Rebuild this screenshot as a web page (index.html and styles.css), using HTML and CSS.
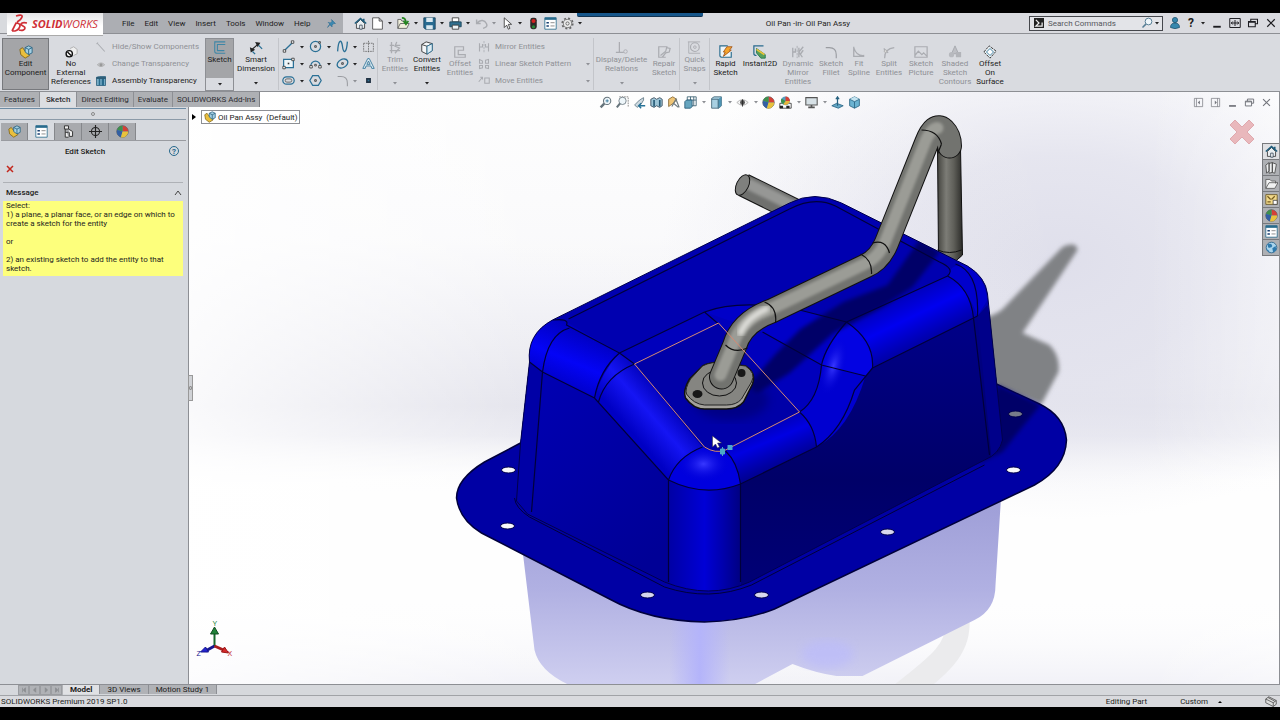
FILE: index.html
```html
<!DOCTYPE html>
<html lang="en">
<head>
<meta charset="utf-8">
<title>Oil Pan -in- Oil Pan Assy</title>
<link rel="stylesheet" href="styles.css">
</head>
<body>
<svg class="sprite" aria-hidden="true">
  <symbol id="line" viewBox="0 0 16 16"><path d="M3 13L13 3" stroke="#2a7096" stroke-width="1.6"/><path d="M1.500 12h3v3h-3zM11.500 1h3v3h-3z" fill="#fff" stroke="#333"/></symbol>
  <symbol id="circle" viewBox="0 0 16 16"><circle cx="8" cy="8" r="6.300" fill="none" stroke="#2a7096" stroke-width="1.500"/><path d="M7 7h2v2H7z" fill="none" stroke="#333"/><path d="M12 2h2v2h-2z" fill="#fff" stroke="#333"/></symbol>
  <symbol id="spline" viewBox="0 0 16 16"><path d="M2 14C3-2 7-1 8 8s5 9 6-6" fill="none" stroke="#2a7096" stroke-width="1.600"/></symbol>
  <symbol id="plane" viewBox="0 0 16 16"><path d="M2 4h12v10H2zM8 1v14" fill="none" stroke="#666" stroke-dasharray="2 1"/></symbol>
  <symbol id="rect" viewBox="0 0 16 16"><path d="M2 3h12v10H2z" fill="#eef5f8" stroke="#2a7096" stroke-width="1.500"/><path d="M7 7h2v2H7z" fill="#333"/><path d="M12 1.500h3v3h-3zM1 11.500h3v3H1z" fill="#fff" stroke="#333"/></symbol>
  <symbol id="arc" viewBox="0 0 16 16"><path d="M2 12a6 7 0 0 1 12 0" fill="none" stroke="#2a7096" stroke-width="1.500"/><path d="M1 10.500h3v3H1zM12 10.500h3v3h-3zM7 9h2v2H7z" fill="#fff" stroke="#333"/></symbol>
  <symbol id="ellipse" viewBox="0 0 16 16"><ellipse cx="8" cy="8" rx="7" ry="5" transform="rotate(-30 8 8)" fill="none" stroke="#2a7096" stroke-width="1.600"/><path d="M7 7h2v2H7z" fill="none" stroke="#333"/></symbol>
  <symbol id="text" viewBox="0 0 16 16"><path d="M1 14L7 2h2l6 12h-3l-1-3H5l-1 3zM6 9h4L8 5z" fill="#dcebf2" stroke="#2a7096"/></symbol>
  <symbol id="slot" viewBox="0 0 16 16"><rect x="1" y="3.500" width="14" height="9" rx="4.500" fill="none" stroke="#2a7096" stroke-width="1.500"/><rect x="4" y="6" width="8" height="4" rx="2" fill="none" stroke="#555"/></symbol>
  <symbol id="hex" viewBox="0 0 16 16"><path d="M4.500 2h7L15 8l-3.500 6h-7L1 8z" fill="none" stroke="#2a7096" stroke-width="1.500"/><path d="M7 7h2v2H7z" fill="none" stroke="#333"/></symbol>
  <symbol id="fillet" viewBox="0 0 16 16"><path d="M2 3h4q8 0 8 8v4" fill="none" stroke="#9a9ca1" stroke-width="1.300"/></symbol>
  <symbol id="point" viewBox="0 0 16 16"><path d="M6 6h4v4H6z" fill="#2a7096" stroke="#234" stroke-width="2"/></symbol>
  <symbol id="assy" viewBox="0 0 16 16"><path d="M1 5l3-2 3 4 5 2v3l-5 3-5-4z" fill="#e9bf3d" stroke="#80651a"/><path d="M7 3l4-2 4 2v6l-4 2-4-3z" fill="#a4cfe2" stroke="#286281"/><path d="M7 3l4 2 4-2M11 5v6" fill="none" stroke="#286281"/></symbol>
  <symbol id="noref" viewBox="0 0 16 16"><path d="M7 4l4-2 4 3v5l-4 2" fill="#eee" stroke="#aaa"/><circle cx="6" cy="10" r="3.600" fill="#fff" stroke="#111" stroke-width="1.600"/><path d="M4 8l4 4" stroke="#111" stroke-width="1.600"/></symbol>
  <symbol id="slash" viewBox="0 0 16 16"><path d="M3 3l10 11M2 4l2-2" stroke="#aaacb1" stroke-width="1.400"/></symbol>
  <symbol id="eyeoff" viewBox="0 0 16 16"><path d="M3 9q5-5 10 0-5 5-10 0z" fill="#c3c5c9" stroke="#aaa"/><circle cx="8" cy="9" r="2" fill="#999"/></symbol>
  <symbol id="assytrans" viewBox="0 0 16 16"><path d="M2 3l4-1h8v12H2z" fill="#77adc7" stroke="#245875"/><path d="M5 5h2v9H5zM9 5h3v9H9z" fill="#286b8d"/><path d="M2 4h12" stroke="#174761" stroke-width="2"/></symbol>
  <symbol id="sketch" viewBox="0 0 16 16"><path d="M14 1H2v11q0 2 3 2h9M14 4H5v7h8" fill="none" stroke="#3e86a6" stroke-width="1.200"/></symbol>
  <symbol id="dimension" viewBox="0 0 16 16"><path d="M3 10L11 3" stroke="#222" stroke-width="1.300"/><path d="M7 1l6 1-3 5zM1 7l1 6 5-3z" fill="#222"/><path d="M11 5l4 4M4 12l3 3" stroke="#2a7096" stroke-width="1.500"/></symbol>
  <symbol id="trim" viewBox="0 0 16 16"><path d="M2 5h5M9 5h5M2 11h12M4 1v13M10 1l-2 5 5 2-5 6" fill="none" stroke="#aaacb1" stroke-width="1.500"/></symbol>
  <symbol id="convert" viewBox="0 0 16 16"><path d="M2 4l5-3 7 2v8l-6 4-6-3z" fill="#f5f7f8" stroke="#333"/><path d="M2 4l6 2 6-3M8 6v9" fill="none" stroke="#333"/><path d="M8 6l6-3v8l-6 4z" fill="#dcebf2" stroke="#2a7096"/></symbol>
  <symbol id="offset" viewBox="0 0 16 16"><path d="M12 2H2v12h12v-3H6V6h6z" fill="none" stroke="#aaacb1" stroke-width="1.400"/></symbol>
  <symbol id="mirror" viewBox="0 0 16 16"><path d="M8 0v16" stroke="#aaacb1" stroke-dasharray="3 1"/><path d="M2 3v11M2 8h4V4M14 3v11M14 8h-4V4" fill="none" stroke="#aaacb1" stroke-width="1.500"/></symbol>
  <symbol id="dynmirror" viewBox="0 0 16 16"><path d="M7 1v14" stroke="#aaacb1" stroke-dasharray="3 1"/><path d="M2 3v11M2 8h3V4M14 2l-5 6 4 6M9 3v11M14 6l-3 4" fill="none" stroke="#aaacb1" stroke-width="1.500"/></symbol>
  <symbol id="pattern" viewBox="0 0 16 16"><path d="M2 2l4 2v3H2zM10 3l4-1v5h-4zM2 10h4v3l-4 1zM10 10h4v4l-4-1z" fill="none" stroke="#aaacb1" stroke-width="1.400"/></symbol>
  <symbol id="move" viewBox="0 0 16 16"><path d="M1 9l5-6M3 3h3v3M9 4h6v7H9z" fill="none" stroke="#aaacb1" stroke-width="1.400"/></symbol>
  <symbol id="relations" viewBox="0 0 16 16"><path d="M1 13h9M5 1v12" stroke="#aaacb1" stroke-width="1.400"/><circle cx="12" cy="12" r="2" fill="none" stroke="#aaacb1"/></symbol>
  <symbol id="repair" viewBox="0 0 16 16"><path d="M12 2H2v12h8M4 12l6-5 1-4 4 1-1 4-4 1-4 5" fill="none" stroke="#aaacb1" stroke-width="1.400"/></symbol>
  <symbol id="snaps" viewBox="0 0 16 16"><path d="M1 1h14M2 1v13h13" fill="none" stroke="#aaacb1"/><circle cx="9" cy="7" r="5" fill="none" stroke="#aaacb1" stroke-width="1.300"/><circle cx="9" cy="7" r="1.500" fill="none" stroke="#aaacb1"/></symbol>
  <symbol id="rapid" viewBox="0 0 16 16"><path d="M10 1H1v11q0 2 3 2h10V8" fill="#eef5f8" stroke="#286b8d" stroke-width="1.300"/><path d="M9 2h6l-3 4h2L5 13l2-5H5z" fill="#f5a42c" stroke="#a3571d"/></symbol>
  <symbol id="instant" viewBox="0 0 16 16"><path d="M12 1H1v9q0 2 3 2" fill="none" stroke="#286b8d" stroke-width="1.400"/><path d="M4 4l10 7v4H9L4 9z" fill="#59a05b" stroke="#275"/><path d="M4 5l9 6" stroke="#eac336" stroke-width="2"/></symbol>
  <symbol id="fit" viewBox="0 0 16 16"><path d="M2 2v11h12M2 3q3 10 12 9" fill="none" stroke="#aaacb1" stroke-width="1.500"/></symbol>
  <symbol id="split" viewBox="0 0 16 16"><path d="M3 15Q3 4 14 3M2 4l5 5" fill="none" stroke="#aaacb1" stroke-width="1.400"/><circle cx="4" cy="7" r="1.500" fill="#ddd" stroke="#aaa"/></symbol>
  <symbol id="picture" viewBox="0 0 16 16"><path d="M1 2h14v12H1zM1 12l4-5 4 4 2-2 4 4" fill="none" stroke="#aaacb1" stroke-width="1.400"/></symbol>
  <symbol id="shaded" viewBox="0 0 16 16"><path d="M8 1l4 9H4z" fill="#bdbfc4" stroke="#a4a6ab"/><circle cx="4" cy="11" r="3" fill="#b7b9be"/><path d="M9 8h6v6H9z" fill="#b2b4b9"/></symbol>
  <symbol id="surface" viewBox="0 0 16 16"><path d="M1 8l6-7 8 6-7 8z" fill="#eef3f5" stroke="#222" stroke-dasharray="3 1"/><path d="M4 8l4-4 4 4-4 4z" fill="#fff" stroke="#2a7096"/></symbol>
  <symbol id="home" viewBox="0 0 16 16"><path d="M3 8v6h10V8L8 3z" fill="#e9eef1" stroke="#333"/><path d="M1 8l7-6 7 6M12 2v4" fill="none" stroke="#1f5c7b" stroke-width="2"/><path d="M7 10h3v5H7z" fill="#fff" stroke="#345"/></symbol>
  <symbol id="new" viewBox="0 0 16 16"><path d="M2 1h8l4 4v10H2zM10 1v4h4" fill="#fff" stroke="#444"/></symbol>
  <symbol id="open" viewBox="0 0 16 16"><path d="M1 14V3h4l1 2h5v3M1 14l3-6h11l-3 6z" fill="#f0efdc" stroke="#555"/><path d="M6 1q5 0 5 6M8 5l3 4 3-4" fill="none" stroke="#24851f" stroke-width="2"/></symbol>
  <symbol id="save" viewBox="0 0 16 16"><path d="M1 1h14v14H3l-2-2z" fill="#286b91" stroke="#163f59"/><path d="M4 1h8v5H4zM4 10h8v5H4z" fill="#dbe9f0"/></symbol>
  <symbol id="print" viewBox="0 0 16 16"><path d="M4 1h8v5H4z" fill="#fff" stroke="#333"/><path d="M1 6h14v6H1z" fill="#31708f" stroke="#174156"/><path d="M4 10h8v5H4z" fill="#eef4f6" stroke="#333"/></symbol>
  <symbol id="undo" viewBox="0 0 16 16"><path d="M2 3v5h5M2 8c5-6 10-4 12 0s-1 5-4 6" fill="none" stroke="#aaacb1" stroke-width="1.800"/></symbol>
  <symbol id="cursor" viewBox="0 0 16 16"><path d="M4 1v12l3-3 2 5 2-1-2-5h4z" fill="#fff" stroke="#333"/></symbol>
  <symbol id="traffic" viewBox="0 0 16 16"><rect x="4" y="1" width="8" height="14" rx="3" fill="#2d2926"/><circle cx="8" cy="5" r="2.500" fill="#d32121"/><circle cx="8" cy="12" r="2" fill="#278736"/></symbol>
  <symbol id="list" viewBox="0 0 16 16"><path d="M1 1h14v14H1z" fill="#fff" stroke="#286b8d"/><path d="M1 2h14" stroke="#286b8d" stroke-width="3"/><path d="M3 6h3v2H3zM3 10h3v2H3z" fill="#173e70"/><path d="M8 7h5M8 11h5" stroke="#777"/></symbol>
  <symbol id="gear" viewBox="0 0 16 16"><circle cx="8" cy="8" r="6.500" fill="none" stroke="#666" stroke-width="2" stroke-dasharray="2.500 2.600"/><circle cx="8" cy="8" r="5" fill="#eee" stroke="#666"/><circle cx="8" cy="8" r="2" fill="none" stroke="#555"/></symbol>
  <symbol id="pin" viewBox="0 0 16 16"><path d="M8 1l7 7-3 0-3 3v3L5 10 1 15l4-6L2 6l4 1 3-3z" fill="#3c88b0" stroke="#2a6b90"/></symbol>
  <symbol id="user" viewBox="0 0 16 16"><circle cx="8" cy="4" r="3.500" fill="#3688ae" stroke="#1c526e"/><path d="M2 14q0-6 6-6t6 6q-6 3-12 0z" fill="#3688ae" stroke="#1c526e"/></symbol>
  <symbol id="prompt" viewBox="0 0 16 16"><path d="M0 0h16v16H0z" fill="#222"/><path d="M3 3l5 5-5 5h10V7" fill="none" stroke="#eee" stroke-width="2"/></symbol>
  <symbol id="lens" viewBox="0 0 16 16"><circle cx="10" cy="6" r="4.500" fill="#eff6fa" stroke="#557d94" stroke-width="1.300"/><path d="M6.500 9.500L2 14" stroke="#557d94" stroke-width="2"/></symbol>
  <symbol id="zoomfit" viewBox="0 0 16 16"><circle cx="10" cy="6" r="4.500" fill="#eff6fa" stroke="#66747c" stroke-width="1.300"/><path d="M8 6h4M10 4v4" stroke="#2a7096"/><path d="M6.500 9.500L2 14" stroke="#66747c" stroke-width="3"/></symbol>
  <symbol id="min" viewBox="0 0 16 16"><path d="M3 13h10" stroke="currentColor" stroke-width="2.500"/></symbol>
  <symbol id="expand" viewBox="0 0 16 16"><path d="M1 2h14v12H1zM8 4v8M3 8h10M5 6L3 8l2 2M11 6l2 2-2 2" fill="none" stroke="currentColor" stroke-width="1.300"/></symbol>
  <symbol id="restore" viewBox="0 0 16 16"><path d="M5 6V3h9v6h-3M2 6h9v7H2zM2 7h9" fill="none" stroke="currentColor" stroke-width="1.400"/></symbol>
  <symbol id="close" viewBox="0 0 16 16"><path d="M3 3l10 10M13 3L3 13" stroke="currentColor" stroke-width="1.600"/></symbol>
  <symbol id="paneleft" viewBox="0 0 16 16"><path d="M2 2h12v12H2zM5 2v12" fill="none" stroke="currentColor"/><path d="M10 5v6L7 8z" fill="currentColor"/></symbol>
  <symbol id="paneright" viewBox="0 0 16 16"><path d="M2 2h12v12H2zM11 2v12" fill="none" stroke="currentColor"/><path d="M7 5v6l3-3z" fill="currentColor"/></symbol>
  <symbol id="target" viewBox="0 0 16 16"><circle cx="8" cy="8" r="5" fill="none" stroke="#222" stroke-width="1.300"/><path d="M0 8h16M8 0v16" stroke="#222" stroke-width="1.400"/></symbol>
  <symbol id="config" viewBox="0 0 16 16"><path d="M3 1h5v4H3zM4 5v10h4M4 9h4M8 5l5 3v6H9V9" fill="#eee" stroke="#333" stroke-width="1.200"/></symbol>
  <symbol id="ball" viewBox="0 0 16 16"><circle cx="8" cy="8" r="7" fill="#5189c1" stroke="#555"/><path d="M8 8V1a7 7 0 0 1 7 7z" fill="#d64036"/><path d="M8 8V1a7 7 0 0 0-6.500 5z" fill="#3e914c"/><path d="M8 8L1.500 6A7 7 0 0 0 6 15z" fill="#335fa4"/><path d="M8 8h7a7 7 0 0 1-9 7z" fill="#e8c23c"/></symbol>
  <symbol id="books" viewBox="0 0 16 16"><path d="M1 5l4-3v10l-3 3zM5 3l4-1v12l-4 1zM9 2l5 2-2 11-3-1z" fill="#eceeef" stroke="#444"/></symbol>
  <symbol id="folder" viewBox="0 0 16 16"><path d="M1 14V3h5l2 2h5v3M1 14l4-7h11l-4 7z" fill="#f1f2f2" stroke="#555"/></symbol>
  <symbol id="palette" viewBox="0 0 16 16"><path d="M1 2h14v12H1z" fill="#f1d98a" stroke="#635223"/><path d="M3 4l4 4M12 4L8 8M3 11h4" stroke="#755b20" stroke-width="1.500"/><path d="M10 9h5v5h-5z" fill="#fff" stroke="#444"/></symbol>
  <symbol id="globe" viewBox="0 0 16 16"><circle cx="8" cy="8" r="6.500" fill="#a9d4ec" stroke="#24608a"/><path d="M3 4q5-2 6 2-1 3-5 2M9 9l4-3 1 5-4 3zM1 10q4 0 5 5" fill="#2d79ad"/></symbol>
  <symbol id="zoomarea" viewBox="0 0 16 16"><path d="M4 1h11v12" fill="none" stroke="#777" stroke-dasharray="2 1"/><circle cx="8" cy="6" r="4.500" fill="#eef6fa" stroke="#66747c"/><path d="M5 9l-4 5" stroke="#66747c" stroke-width="2.500"/></symbol>
  <symbol id="prev" viewBox="0 0 16 16"><path d="M13 2L8 5 2 11l3 3 5-4 3-5z" fill="#cdd9e0" stroke="#5d7481"/><path d="M7 12h8m-5-3l-3 3 3 3" fill="none" stroke="#267297" stroke-width="1.700"/></symbol>
  <symbol id="section" viewBox="0 0 16 16"><path d="M1 4l4-2 3 2 4-2 3 2v8l-3 2-4-2-3 2-4-2z" fill="#9cc4d6" stroke="#345"/><path d="M5 5v8M12 5v8" stroke="#245875" stroke-width="2"/></symbol>
  <symbol id="dynamicview" viewBox="0 0 16 16"><path d="M2 4l5-3 5 3-3 4-7 5z" fill="#efc578" stroke="#836430"/><path d="M6 13l5-9 4 10M8 9l6 5" fill="none" stroke="#6f7b80" stroke-width="1.500"/></symbol>
  <symbol id="views" viewBox="0 0 16 16"><path d="M4 1h11v11H4zM8 1v9M4 5h11M12 1v11" fill="#fff" stroke="#31596b"/><path d="M1 7l2-2h7v8l-2 2H1z" fill="#66a5bf" stroke="#245875"/></symbol>
  <symbol id="cube" viewBox="0 0 16 16"><path d="M2 4l6-3 6 3v8l-6 3-6-3z" fill="#6bb3d2" stroke="#286281"/><path d="M2 4l6 3 6-3-6-3z" fill="#c3e3f0"/><path d="M8 7v8M2 4l6 3 6-3" fill="none" stroke="#286281"/></symbol>
  <symbol id="shadebox" viewBox="0 0 16 16"><path d="M2 3l3-2h9v11l-3 3H2z" fill="#a8d0e2" stroke="#3d6072"/><path d="M10 4l4-3v11l-4 3z" fill="#4e94b3"/><path d="M2 4h8v11" fill="none" stroke="#3d6072"/></symbol>
  <symbol id="eye" viewBox="0 0 16 16"><path d="M1 8q7-7 14 0-7 7-14 0z" fill="#f3f3f3" stroke="#aaa"/><circle cx="8" cy="8" r="3" fill="#555"/><path d="M8 4v9" stroke="#222"/></symbol>
  <symbol id="scene" viewBox="0 0 16 16"><path d="M1 9h14v6H1z" fill="#fff" stroke="#333"/><path d="M1 12h4v3H1zM9 12h4v3H9z" fill="#222"/><circle cx="8" cy="6" r="5.500" fill="#549dc1"/><path d="M8 6V.5A5.500 5.500 0 0 1 13.500 6z" fill="#d64036"/><path d="M8 6h5.500A5.500 5.500 0 0 1 5 10z" fill="#e8b63c"/><path d="M8 6L3 3a5.500 5.500 0 0 0 2 7z" fill="#3e914c"/></symbol>
  <symbol id="monitor" viewBox="0 0 16 16"><path d="M1 2h14v9H1z" fill="#d7e1e6" stroke="#555" stroke-width="1.300"/><path d="M8 11v3M4 14h8" stroke="#555" stroke-width="2"/></symbol>
  <symbol id="normal" viewBox="0 0 16 16"><path d="M1 12l6-3 8 3-6 3z" fill="#65a8c6" stroke="#286281"/><path d="M8 12V2M6 4l2-3 2 3" fill="none" stroke="#286281" stroke-width="1.500"/></symbol>
  <symbol id="eraser" viewBox="0 0 16 16"><path d="M1 4l4-3 10 5v5l-4 3L1 9zM1 4l10 5v5M11 9l4-3M4 2l9 5" fill="#ddd" stroke="#444"/></symbol>
  <symbol id="caret" viewBox="0 0 6 6"><path d="M1 2h4L3 4.500z" fill="currentColor"/></symbol>
</svg>

<header class="titlebar">
  <div class="menuzone">
    <div class="brand" aria-label="SOLIDWORKS">
      <svg class="brandmark" viewBox="0 0 18 20" aria-hidden="true"><path d="M5 2q7-2 6 1-1 3-5 5M1 17h3q4-1 5-5 0-3-4-3L1 17M16 9q-5-1-6 1c0 2 4 2 4 4s-3 3-6 2" fill="none" stroke="#cf2f36" stroke-width="1.700"/></svg>
      <span class="brandtext"><b>SOLID</b>WORKS</span>
    </div>
    <nav class="menus">
      <button>File</button><button>Edit</button><button>View</button><button>Insert</button><button>Tools</button><button>Window</button><button>Help</button>
    </nav>
    <button class="ico" aria-label="Pin menu"><svg><use href="#pin"/></svg></button>
  </div>
  <div class="quick">
    <button class="ico" aria-label="Home"><svg><use href="#home"/></svg></button>
    <button class="ico" aria-label="New"><svg><use href="#new"/></svg></button><button class="car" aria-label="New options"><svg><use href="#caret"/></svg></button>
    <button class="ico" aria-label="Open"><svg><use href="#open"/></svg></button><button class="car" aria-label="Open options"><svg><use href="#caret"/></svg></button>
    <button class="ico" aria-label="Save"><svg><use href="#save"/></svg></button><button class="car" aria-label="Save options"><svg><use href="#caret"/></svg></button>
    <button class="ico" aria-label="Print"><svg><use href="#print"/></svg></button><button class="car" aria-label="Print options"><svg><use href="#caret"/></svg></button>
    <button class="ico" aria-label="Undo"><svg><use href="#undo"/></svg></button><button class="car off" aria-label="Undo options"><svg><use href="#caret"/></svg></button>
    <button class="ico" aria-label="Select"><svg><use href="#cursor"/></svg></button><button class="car" aria-label="Select options"><svg><use href="#caret"/></svg></button>
    <button class="ico" aria-label="Rebuild"><svg><use href="#traffic"/></svg></button>
    <button class="ico" aria-label="File properties"><svg><use href="#list"/></svg></button>
    <button class="ico" aria-label="Options"><svg><use href="#gear"/></svg></button><button class="car" aria-label="More options"><svg><use href="#caret"/></svg></button>
  </div>
  <div class="doctitle">Oil Pan -in- Oil Pan Assy</div>
  <div class="titleright">
    <div class="search">
      <svg class="s10"><use href="#prompt"/></svg>
      <input type="text" placeholder="Search Commands" aria-label="Search Commands">
      <button class="ico" aria-label="Search"><svg><use href="#lens"/></svg></button><button class="car" aria-label="Search options"><svg><use href="#caret"/></svg></button>
    </div>
    <button class="ico" aria-label="Account"><svg><use href="#user"/></svg></button>
    <button class="help" aria-label="Help">?</button><button class="car" aria-label="Help options"><svg><use href="#caret"/></svg></button>
    <button class="ico" aria-label="Minimize"><svg><use href="#min"/></svg></button>
    <button class="ico" aria-label="Span displays"><svg><use href="#expand"/></svg></button>
    <button class="ico" aria-label="Restore"><svg><use href="#restore"/></svg></button>
    <button class="ico" aria-label="Close"><svg><use href="#close"/></svg></button>
  </div>
  <div class="sharebar"></div>
</header>

<section class="ribbon" aria-label="Sketch commands">
  <button class="tool pressed w48"><svg><use href="#assy"/></svg><span>Edit<br>Component</span></button>
  <button class="tool w44"><svg><use href="#noref"/></svg><span>No<br>External<br>References</span></button>
  <div class="rows assyrows">
    <button disabled><svg><use href="#slash"/></svg>Hide/Show Components</button>
    <button disabled><svg><use href="#eyeoff"/></svg>Change Transparency</button>
    <button><svg><use href="#assytrans"/></svg>Assembly Transparency</button>
  </div>
  <div class="splitbtn"><button class="tool tight pressed"><svg><use href="#sketch"/></svg><span>Sketch</span></button><button class="car" aria-label="Sketch options"><svg><use href="#caret"/></svg></button></div>
  <div class="stack w44"><button class="tool tight"><svg><use href="#dimension"/></svg><span>Smart<br>Dimension</span></button><button class="car" aria-label="Dimension options"><svg><use href="#caret"/></svg></button></div>
  <div class="shapes">
    <button class="ico" aria-label="Line"><svg><use href="#line"/></svg></button><button class="car" aria-label="Line options"><svg><use href="#caret"/></svg></button>
    <button class="ico" aria-label="Circle"><svg><use href="#circle"/></svg></button><button class="car" aria-label="Circle options"><svg><use href="#caret"/></svg></button>
    <button class="ico" aria-label="Spline"><svg><use href="#spline"/></svg></button><button class="car" aria-label="Spline options"><svg><use href="#caret"/></svg></button>
    <button class="ico" aria-label="Plane"><svg><use href="#plane"/></svg></button>
    <button class="ico" aria-label="Rectangle"><svg><use href="#rect"/></svg></button><button class="car" aria-label="Rectangle options"><svg><use href="#caret"/></svg></button>
    <button class="ico" aria-label="Arc"><svg><use href="#arc"/></svg></button><button class="car" aria-label="Arc options"><svg><use href="#caret"/></svg></button>
    <button class="ico" aria-label="Ellipse"><svg><use href="#ellipse"/></svg></button><button class="car" aria-label="Ellipse options"><svg><use href="#caret"/></svg></button>
    <button class="ico" aria-label="Text"><svg><use href="#text"/></svg></button>
    <button class="ico" aria-label="Slot"><svg><use href="#slot"/></svg></button><button class="car" aria-label="Slot options"><svg><use href="#caret"/></svg></button>
    <button class="ico" aria-label="Polygon"><svg><use href="#hex"/></svg></button><span></span>
    <button class="ico" aria-label="Sketch fillet"><svg><use href="#fillet"/></svg></button><button class="car off" aria-label="Fillet options"><svg><use href="#caret"/></svg></button>
    <button class="ico" aria-label="Point"><svg><use href="#point"/></svg></button>
  </div>
  <div class="stack w32"><button class="tool tight" disabled><svg><use href="#trim"/></svg><span>Trim<br>Entities</span></button><button class="car off" aria-label="Trim options"><svg><use href="#caret"/></svg></button></div>
  <div class="stack w32"><button class="tool tight"><svg><use href="#convert"/></svg><span>Convert<br>Entities</span></button><button class="car" aria-label="Convert options"><svg><use href="#caret"/></svg></button></div>
  <button class="tool w34" disabled><svg><use href="#offset"/></svg><span>Offset<br>Entities</span></button>
  <div class="rows entrows">
    <button disabled><svg><use href="#mirror"/></svg>Mirror Entities</button>
    <button disabled><svg><use href="#pattern"/></svg>Linear Sketch Pattern<svg class="end"><use href="#caret"/></svg></button>
    <button disabled><svg><use href="#move"/></svg>Move Entities<svg class="end"><use href="#caret"/></svg></button>
  </div>
  <div class="stack w56 sep"><button class="tool tight" disabled><svg><use href="#relations"/></svg><span>Display/Delete<br>Relations</span></button><button class="car off" aria-label="Relations options"><svg><use href="#caret"/></svg></button></div>
  <button class="tool w30" disabled><svg><use href="#repair"/></svg><span>Repair<br>Sketch</span></button>
  <div class="stack w30 sep"><button class="tool tight" disabled><svg><use href="#snaps"/></svg><span>Quick<br>Snaps</span></button><button class="car off" aria-label="Snap options"><svg><use href="#caret"/></svg></button></div>
  <button class="tool w32 sep"><svg><use href="#rapid"/></svg><span>Rapid<br>Sketch</span></button>
  <button class="tool w38"><svg><use href="#instant"/></svg><span>Instant2D</span></button>
  <button class="tool w38" disabled><svg><use href="#dynmirror"/></svg><span>Dynamic<br>Mirror<br>Entities</span></button>
  <button class="tool w28" disabled><svg><use href="#fillet"/></svg><span>Sketch<br>Fillet</span></button>
  <button class="tool w28" disabled><svg><use href="#fit"/></svg><span>Fit<br>Spline</span></button>
  <button class="tool w32" disabled><svg><use href="#split"/></svg><span>Split<br>Entities</span></button>
  <button class="tool w32" disabled><svg><use href="#picture"/></svg><span>Sketch<br>Picture</span></button>
  <button class="tool w36" disabled><svg><use href="#shaded"/></svg><span>Shaded<br>Sketch<br>Contours</span></button>
  <button class="tool w34"><svg><use href="#surface"/></svg><span>Offset<br>On<br>Surface</span></button>
</section>

<main class="main">
  <nav class="cmdtabs"><button>Features</button><button class="on">Sketch</button><button>Direct Editing</button><button>Evaluate</button><button>SOLIDWORKS Add-Ins</button></nav>
  <aside class="side">
    <div class="grip"><i></i></div>
    <nav class="ptabs">
      <button aria-label="Feature tree"><svg><use href="#assy"/></svg></button>
      <button class="on" aria-label="Property manager"><svg><use href="#list"/></svg></button>
      <button aria-label="Configurations"><svg><use href="#config"/></svg></button>
      <button aria-label="DimXpert"><svg><use href="#target"/></svg></button>
      <button aria-label="Display manager"><svg><use href="#ball"/></svg></button>
    </nav>
    <div class="phead"><h1>Edit Sketch</h1><button class="q" aria-label="Help">?</button></div>
    <button class="cancel" aria-label="Cancel"><svg viewBox="0 0 8 8"><path d="M1 1l6 6M7 1L1 7" stroke="#c3261c" stroke-width="1.500"/></svg></button>
    <section class="msg">
      <button class="msghead">Message<svg viewBox="0 0 8 6"><path d="M1 5l3-4 3 4" fill="none" stroke="#444"/></svg></button>
      <p>Select:<br>1) a plane, a planar face, or an edge on which to create a sketch for the entity<br><br>or<br><br>2) an existing sketch to add the entity to that sketch.</p>
    </section>
    <button class="collapse" aria-label="Collapse panel"><i></i></button>
  </aside>

  <section class="view" aria-label="Graphics area">
    <svg class="scene" viewBox="189 92 1091 592" preserveAspectRatio="xMidYMid slice" aria-label="Oil pan model">
      <defs>
        <linearGradient id="bg" x1="0" y1="0" x2="0" y2="1"><stop offset="0" stop-color="#e2e2ec" stop-opacity="0"/><stop offset=".25" stop-color="#e2e2ec" stop-opacity=".15"/><stop offset=".53" stop-color="#dedee8" stop-opacity=".85"/><stop offset=".58" stop-color="#e0e0ea" stop-opacity=".7"/><stop offset=".68" stop-color="#fff" stop-opacity="0"/><stop offset=".85" stop-color="#fff" stop-opacity="0"/><stop offset="1" stop-color="#e9e9f3" stop-opacity=".6"/></linearGradient>
        <linearGradient id="fade"><stop offset="0" stop-color="#fff" stop-opacity=".8"/><stop offset=".3" stop-color="#fff" stop-opacity=".1"/><stop offset=".88" stop-color="#fff" stop-opacity="0"/><stop offset="1" stop-color="#fff" stop-opacity=".4"/></linearGradient>
        <radialGradient id="lav"><stop offset="0" stop-color="#dfdfeb"/><stop offset=".4" stop-color="#e2e2ed" stop-opacity=".85"/><stop offset=".7" stop-color="#e6e6f0" stop-opacity=".45"/><stop offset="1" stop-color="#ececf4" stop-opacity="0"/></radialGradient>
        <linearGradient id="refl" x1="0" y1="0" x2="0" y2="1"><stop offset="0" stop-color="#9c9cd6"/><stop offset=".5" stop-color="#b0b0e2"/><stop offset="1" stop-color="#cfcff0"/></linearGradient>
        <linearGradient id="reflmid"><stop offset="0" stop-color="#b4b4fc" stop-opacity="0"/><stop offset=".5" stop-color="#b4b4fa"/><stop offset="1" stop-color="#b4b4fc" stop-opacity="0"/></linearGradient>
        <linearGradient id="left" x1="0" y1="0" x2=".6" y2="1"><stop offset="0" stop-color="#0000b8"/><stop offset="1" stop-color="#000096"/></linearGradient>
        <linearGradient id="right" x1="0" y1="0" x2="0" y2="1"><stop offset="0" stop-color="#00008c"/><stop offset=".6" stop-color="#000068"/><stop offset="1" stop-color="#000078"/></linearGradient>
        <linearGradient id="corner"><stop offset="0" stop-color="#0000a4"/><stop offset=".5" stop-color="#0000d6"/><stop offset=".75" stop-color="#0000ae"/><stop offset="1" stop-color="#000082"/></linearGradient>
        <linearGradient id="band" gradientUnits="userSpaceOnUse" x1="585" y1="332" x2="562" y2="386"><stop offset="0" stop-color="#0000c0"/><stop offset=".55" stop-color="#0404f6"/><stop offset="1" stop-color="#0000c8"/></linearGradient>
        <linearGradient id="slope" gradientUnits="userSpaceOnUse" x1="672" y1="399" x2="633" y2="433"><stop offset="0" stop-color="#0000b4"/><stop offset=".5" stop-color="#1515f4"/><stop offset="1" stop-color="#0000c4"/></linearGradient>
        <linearGradient id="front" gradientUnits="userSpaceOnUse" x1="760" y1="425" x2="778" y2="468"><stop offset="0" stop-color="#0000b2"/><stop offset=".4" stop-color="#0000e2"/><stop offset="1" stop-color="#00008e"/></linearGradient>
        <linearGradient id="rband" gradientUnits="userSpaceOnUse" x1="890" y1="300" x2="914" y2="350"><stop offset="0" stop-color="#0000b8"/><stop offset=".45" stop-color="#0000f0"/><stop offset="1" stop-color="#0000a0"/></linearGradient>
        <radialGradient id="ballshine"><stop offset="0" stop-color="#3838ff"/><stop offset="1" stop-color="#0000d4" stop-opacity="0"/></radialGradient>
        <linearGradient id="leg"><stop offset="0" stop-color="#44443f"/><stop offset=".35" stop-color="#7c7c76"/><stop offset=".65" stop-color="#5f5f59"/><stop offset="1" stop-color="#2c2c29"/></linearGradient>
        <filter id="soft"><feGaussianBlur stdDeviation="2"/></filter><filter id="softer"><feGaussianBlur stdDeviation="5"/></filter>
        <filter id="blend"><feGaussianBlur stdDeviation="1.500"/></filter>
        <clipPath id="body"><path d="M517 501L521 443L530 362Q527 334 553 320L790 203Q815 190 842 203L968 266Q986 277 988 294L1003 440Q1000 454 985 460L750 582Q710 600 665 582L528 514Z"/></clipPath>
      </defs>
      <rect x="-400" y="-400" width="2400" height="1700" fill="#fefefe"/>
      <rect x="189" y="92" width="1091" height="592" fill="url(#bg)"/>
      <ellipse cx="1060" cy="260" rx="400" ry="260" fill="url(#lav)"/>
      <rect x="189" y="92" width="1091" height="592" fill="url(#fade)"/>
      <path d="M958 620C960 650 940 665 900 696" fill="none" stroke="#ebebed" stroke-width="24"/>
      <path d="M523 550L535 650Q540 672 572 686H752L793 664Q816 673 837 676H863L975 620Q996 610 996 585L1002 490L705 600Z" fill="url(#refl)"/>
      <path d="M670 620h60v66h-60z" fill="url(#reflmid)"/>
      <ellipse cx="828" cy="654" rx="26" ry="14" fill="#bcbcfb" opacity=".7" filter="url(#softer)"/>
      <path d="M1063 247Q1077 241 1078 250L1023 333L1050 345Q1061 356 1059 372L1042 404L990 384L975 320Q998 316 1006 306Z" fill="#808285" filter="url(#soft)"/>
      <g stroke-linecap="butt" fill="none"><path d="M744 185L815 220" stroke="#111" stroke-width="24"/><path d="M744 185L815 220" stroke="#6f706e" stroke-width="22"/><path d="M745 182L816 217" stroke="#969795" stroke-width="11" filter="url(#blend)"/></g>
      <ellipse cx="743" cy="185" rx="6" ry="11" transform="rotate(26 743 185)" fill="#7f807e" stroke="#111"/>
      <path d="M938 148H961L963 255Q950 270 939 255Z" fill="url(#leg)" stroke="#111"/><path d="M938 250q12 5 24 0" fill="none" stroke="#111"/>
      <path d="M521 443L485 462Q457 479 457 498Q460 520 482 533L610 599Q650 621 705 622Q745 621 775 609L1035 485Q1066 468 1067 440Q1065 416 1040 404L995 383Z" fill="#0000a4" stroke="#00003c" stroke-width="1.500"/>
      <path d="M998 385L1041 405Q1020 430 1003 452L980 463Z" fill="#000068" filter="url(#soft)"/>
      <g clip-path="url(#body)">
        <path d="M500 180H1010V610H500Z" fill="#0000b0"/>
        <path d="M500 355L530 362L543 372L595 398L669 480L672 600L500 530Z" fill="url(#left)"/>
        <path d="M500 340L530 362L543 372L534 530L500 520Z" fill="#0000a6"/>
        <path d="M530 362Q527 334 553 320L567 322L620 353Q600 370 595 398L543 372Z" fill="url(#band)"/>
        <path d="M595 398Q602 372 620 353L635 364L703 447Q677 457 669 480Z" fill="url(#slope)"/>
        <path d="M620 353L705 312Q740 299 800 310L847 322Q826 346 822 365Q819 400 800 412L719 324L635 364Z" fill="#0000bc"/>
        <path d="M705 312Q740 299 800 310L847 322L822 365L763 332Z" fill="#0000c8"/>
        <path d="M635 364L719 324L800 412L719 452L703 447Z" fill="#0000a8"/>
        <path d="M741 484L817 447Q843 430 855 390L873 368L978 316L1020 300L1020 450L741 600Z" fill="url(#right)"/>
        <path d="M669 480Q705 498 741 484V600H670Z" fill="url(#corner)"/>
        <path d="M669 480Q677 457 703 447Q712 454 726 451Q740 462 741 484Q705 498 669 480Z" fill="#0000de"/>
        <ellipse cx="704" cy="464" rx="26" ry="18" fill="url(#ballshine)"/>
        <path d="M726 451L800 412Q815 425 817 447L741 484Q738 462 726 451Z" fill="url(#front)"/>
        <path d="M800 412Q821 395 822 365L866 376Q850 430 817 447Q815 425 800 412Z" fill="#0000d0"/>
        <path d="M822 365Q826 346 847 322Q875 341 873 368L866 376Z" fill="#0303e2"/>
        <ellipse cx="834" cy="366" rx="12" ry="30" fill="url(#ballshine)" transform="rotate(16 834 366)"/>
        <path d="M847 322L948 275Q970 287 974 318L873 368Q875 341 847 322Z" fill="url(#rband)"/>
        <path d="M948 275Q953 262 968 266Q984 275 988 300L978 316Q968 288 948 275Z" fill="#0000cc"/>
        <path d="M978 316L988 305L1006 450L992 458Z" fill="#00008a"/>
        <path d="M748 386L777 353L801 329L844 302L888 285L920 240L940 252L913 287L883 307L834 333L790 373L758 393Z" fill="#000068" filter="url(#soft)"/>
        <ellipse cx="731" cy="400" rx="38" ry="20" fill="#000066" opacity=".5" filter="url(#softer)"/>
        <g fill="none" stroke="#00003a" stroke-width="1.200"><path d="M530 362L543 372L595 398L669 480V582M543 372Q548 334 570 328M553 320Q570 318 567 325L620 353Q600 370 595 398M543 372L532 512M569 319L790 209Q815 196 836 206L940 262Q956 269 948 276L847 322M620 353L705 312Q740 299 800 310L847 322Q875 341 873 368L978 316M620 353L635 364Q606 376 599 402M705 312L719 324M763 332L822 365L866 376M847 322Q826 346 822 365Q819 400 800 412Q815 425 817 447L741 484Q705 498 669 480Q677 457 703 447M817 447Q843 430 855 390L873 368M726 451Q738 462 741 484V582M948 276Q971 288 974 318L990 455M956 264Q980 272 978 316"/></g>
      </g>
      <path d="M517 501L521 443L530 362Q527 334 553 320L790 203Q815 190 842 203L968 266Q986 277 988 294L1003 440Q1000 454 985 460L750 582Q710 600 665 582L528 514Z" fill="none" stroke="#00004c"/>
      <path d="M515 498Q516 508 530 517L665 587Q710 602 752 585L985 465" fill="none" stroke="#00003a"/>
      <g fill="#f8f8fc" stroke="#00004a"><ellipse cx="509" cy="470" rx="7" ry="3"/><ellipse cx="508" cy="526" rx="7" ry="3"/><ellipse cx="648" cy="595" rx="7" ry="3" fill="#d6d6ee"/><ellipse cx="762" cy="595" rx="7" ry="3" fill="#d6d6ee"/><ellipse cx="888" cy="532" rx="7" ry="3" fill="#d6d6ee"/><ellipse cx="1014" cy="470" rx="7" ry="3"/><ellipse cx="1016" cy="414" rx="7" ry="3" fill="#777b8a"/></g>
      <path d="M703 366Q712 361 724 363L746 366Q757 373 753 384L744 402Q738 409 727 409H705Q694 409 686 398Q683 391 690 379Z" fill="#a3a19b" stroke="#111" stroke-width="1.500"/>
      <path d="M703 366Q712 361 724 363L746 366Q757 373 752 382L742 399Q737 405 727 405H705Q694 404 687 394Q685 389 691 379Z" fill="#858581" stroke="#222"/>
      <ellipse cx="698" cy="394" rx="5" ry="4" fill="#171717"/><ellipse cx="742" cy="373" rx="4" ry="4" fill="#171717"/>
      <ellipse cx="720" cy="383" rx="17" ry="13" fill="#858581" stroke="#111"/>
      <g fill="none" stroke-linejoin="round" stroke-linecap="round">
        <path d="M722 377L735 346Q742 322 772 311L866 266Q880 260 887 243L927 143Q935 122 944 130Q950 136 950 146" stroke="#111" stroke-width="25"/>
        <path d="M722 377L735 346Q742 322 772 311L866 266Q880 260 887 243L927 143Q935 122 944 130Q950 136 950 146" stroke="#72736f" stroke-width="23"/>
        <path d="M721 375L734 344Q741 320 771 309L865 264Q879 258 886 241L926 141Q932 128 938 128" stroke="#9b9c96" stroke-width="12" filter="url(#blend)"/>
      </g>
      <path d="M741 333Q747 318 767 309" fill="none" stroke="#e1e1dd" stroke-width="6" stroke-linecap="round" filter="url(#soft)"/>
      <path d="M726 345Q735 354 748 348M765 302Q778 307 776 323M861 254Q873 260 872 274M873 243Q886 239 890 253M922 130Q938 130 942 144M942 144L938 154" fill="none" stroke="#111" stroke-width="1.200"/>
      <path d="M635 364L719 323L800 412L726 450Q716 454 705 447Z" fill="none" stroke="#d58a72"/>
      <g class="axis"><path d="M215 646V630" stroke="#16692c" stroke-width="2"/><path d="M211 634l4-7 4 7z" fill="#208239" stroke="#124e22"/><path d="M215 646l-9 5" stroke="#16168e" stroke-width="3"/><path d="M201 652l5-5 3 5z" fill="#2323d2" stroke="#16168e"/><path d="M215 646l9 4" stroke="#a81e1e" stroke-width="3"/><path d="M229 653l-4-6-3 5z" fill="#d52a2a" stroke="#9b1717"/><text x="213" y="626" fill="#208239">Y</text><text x="197" y="656" fill="#16168e">Z</text><text x="228" y="656" fill="#bf2222">X</text></g>
      <path d="M713 436v11l3-3 2 4 2-1-2-4h4z" fill="#fff" stroke="#333" stroke-width=".5"/><path d="M721 449h4v5h-4zM723 447v9" fill="#4caac7" stroke="#4caac7"/><path d="M728 445h5v5h-5z" fill="#4ba7d1"/>
    </svg>
    <div class="tree"><svg viewBox="0 0 4 6"><path d="M0 0l4 3-4 3z"/></svg><button><svg class="s12"><use href="#assy"/></svg>Oil Pan Assy&nbsp; (Default)</button></div>
    <div class="hud">
      <button class="ico" aria-label="Zoom to fit"><svg><use href="#zoomfit"/></svg></button><button class="ico" aria-label="Zoom to area"><svg><use href="#zoomarea"/></svg></button><button class="ico" aria-label="Previous view"><svg><use href="#prev"/></svg></button><button class="ico" aria-label="Section view"><svg><use href="#section"/></svg></button><button class="ico" aria-label="Annotation views"><svg><use href="#dynamicview"/></svg></button><button class="ico" aria-label="View orientation"><svg><use href="#views"/></svg></button><button class="car off" aria-label="Orientation options"><svg><use href="#caret"/></svg></button><button class="ico" aria-label="Display style"><svg><use href="#shadebox"/></svg></button><button class="car off" aria-label="Style options"><svg><use href="#caret"/></svg></button><button class="ico" aria-label="Hide items"><svg><use href="#eye"/></svg></button><button class="car off" aria-label="Hide options"><svg><use href="#caret"/></svg></button><button class="ico" aria-label="Edit appearance"><svg><use href="#ball"/></svg></button><button class="ico" aria-label="Apply scene"><svg><use href="#scene"/></svg></button><button class="car off" aria-label="Scene options"><svg><use href="#caret"/></svg></button><button class="ico" aria-label="View settings"><svg><use href="#monitor"/></svg></button><button class="car off" aria-label="Settings options"><svg><use href="#caret"/></svg></button><button class="ico" aria-label="Normal to"><svg><use href="#normal"/></svg></button><button class="ico" aria-label="Isometric"><svg><use href="#cube"/></svg></button>
    </div>
    <div class="docctl"><button class="ico" aria-label="Pane left"><svg><use href="#paneleft"/></svg></button><button class="ico" aria-label="Pane right"><svg><use href="#paneright"/></svg></button><button class="ico" aria-label="Minimize document"><svg><use href="#min"/></svg></button><button class="ico" aria-label="Restore document"><svg><use href="#restore"/></svg></button><button class="ico" aria-label="Close document"><svg><use href="#close"/></svg></button></div>
    <button class="bigx" aria-label="Exit sketch"><svg viewBox="0 0 24 24"><path d="M5 0l7 7 7-7 5 5-7 7 7 7-5 5-7-7-7 7-5-5 7-7-7-7z" fill="#e9b8bc" stroke="#dfa9ae"/></svg></button>
    <nav class="taskpane"><button class="on" aria-label="Resources"><svg><use href="#home"/></svg></button><button aria-label="Design library"><svg><use href="#books"/></svg></button><button aria-label="File explorer"><svg><use href="#folder"/></svg></button><button aria-label="View palette"><svg><use href="#palette"/></svg></button><button aria-label="Appearances"><svg><use href="#ball"/></svg></button><button aria-label="Custom properties"><svg><use href="#list"/></svg></button><button aria-label="Forum"><svg><use href="#globe"/></svg></button></nav>
  </section>
</main>

<nav class="doctabs"><div class="playback"><button disabled aria-label="First"><svg viewBox="0 0 8 8"><path d="M2 1v6M6 1L3 4l3 3z"/></svg></button><button disabled aria-label="Previous"><svg viewBox="0 0 8 8"><path d="M5 1L2 4l3 3z"/></svg></button><button disabled aria-label="Next"><svg viewBox="0 0 8 8"><path d="M3 1l3 3-3 3z"/></svg></button><button disabled aria-label="Last"><svg viewBox="0 0 8 8"><path d="M6 1v6M2 1l3 3-3 3z"/></svg></button></div><button class="tab on">Model</button><button class="tab">3D Views</button><button class="tab">Motion Study 1</button></nav>
<footer class="status"><span class="product">SOLIDWORKS Premium 2019 SP1.0</span><span class="mode">Editing Part</span><button class="units">Custom<svg viewBox="0 0 6 6"><path d="M1 4h4L3 2z"/></svg></button><svg class="s12"><use href="#eraser"/></svg></footer>
</body>
</html>
```
FILE: styles.css
```css
* { box-sizing: border-box; }
body {
  margin: 0;
  padding: 13px 0;
  min-height: 100vh;
  display: flex;
  flex-direction: column;
  background: #000;
  color: #1c1c20;
  font-family: Roboto, "Noto Sans", sans-serif;
  font-size: 8px;
  line-height: 9px;
}
.sprite { position: absolute; width: 0; height: 0; }
svg { display: block; flex: none; }
button { margin: 0; padding: 0; border: 0; background: none; font: inherit; color: inherit; display: flex; align-items: center; justify-content: center; flex: none; white-space: nowrap; }
button:disabled { color: #8f9196; }
.ico { width: 14px; height: 14px; }
.ico svg { width: 14px; height: 14px; }
.car { width: 6px; height: 10px; color: #222; }
.car svg { width: 6px; height: 6px; }
.car.off { color: #8d8f94; }
.s10 { width: 10px; height: 10px; }
.s12 { width: 12px; height: 12px; }

/* title bar */
.titlebar { position: relative; display: flex; height: 21px; background: #dadbe0; border-bottom: 1px solid #8d8f94; }
.menuzone { display: flex; align-items: center; width: 343px; padding-left: 7px; background: linear-gradient(90deg, #d8dade 7px, #acaeb3 7px); }
.brand { display: flex; align-items: center; align-self: flex-start; width: 96px; height: 23px; padding-left: 4px; gap: 3px; background: linear-gradient(#e4e4e6, #fff 60%); border-bottom: 1px solid #aaa; z-index: 1; flex: none; color: #cf2f36; }
.brandmark { width: 18px; height: 20px; }
.brandtext { font: italic 11px/14px "Open Sans", sans-serif; }
.menus { display: flex; flex: 1; gap: 10px; padding-left: 19px; }
.menuzone .ico { margin-right: 5px; }
.menuzone .ico svg { width: 9px; height: 9px; }
.quick { display: flex; align-items: center; gap: 3px; padding-left: 10px; }
.quick .ico svg { width: 13px; height: 13px; }
.doctitle { flex: 1; text-align: center; align-self: center; padding-left: 4px; }
.titleright { display: flex; align-items: center; gap: 4px; padding-right: 2px; }
.search { display: flex; align-items: center; width: 134px; height: 15px; padding: 0 2px 0 4px; border: 1px solid #45474c; background: #e3e4e8; margin-right: 1px; }
.search input { flex: 1; min-width: 0; border: 0; padding: 0 4px; background: none; font: inherit; outline: 0; }
.search input::placeholder { color: #55575c; opacity: 1; }
.titleright .ico svg { width: 12px; height: 12px; }
.help { width: 10px; font-size: 12px; font-weight: 700; }
.sharebar { position: absolute; left: 577px; top: 0; width: 126px; height: 4px; background: #16568a; border-bottom: 1px solid #123350; border-radius: 0 0 2px 2px; }

/* ribbon */
.ribbon { display: flex; height: 58px; padding: 4px 2px 1px; background: #d9dbe0; border-bottom: 1px solid #8d8f94; }
.tool { flex-direction: column; justify-content: flex-start; padding-top: 7px; height: 52px; text-align: center; }
.tool svg { width: 14px; height: 14px; }
.tight { height: 39px; padding-top: 3px; }
.pressed { background: #a4a5a8; border: 1px solid #77797d; padding-top: 6px; }
.tight.pressed { padding-top: 2px; }
.stack, .splitbtn { display: flex; flex-direction: column; align-items: center; flex: none; }
.stack .car, .splitbtn .car { height: 12px; width: 100%; }
.splitbtn { width: 29px; border: 1px solid #8d8f94; height: 53px; }
.splitbtn .tool { width: 100%; border: 0; }
.sep { border-left: 1px solid #c3c5ca; }
.w28 { width: 28px; } .w30 { width: 30px; } .w32 { width: 32px; } .w34 { width: 34px; } .w36 { width: 36px; }
.w38 { width: 38px; } .w44 { width: 44px; } .w48 { width: 47px; } .w56 { width: 56px; }
.rows { display: flex; flex-direction: column; flex: none; }
.rows button { justify-content: flex-start; gap: 5px; height: 17px; }
.rows svg { width: 12px; height: 12px; }
.rows .end { width: 6px; height: 6px; margin-left: auto; margin-right: 2px; }
.assyrows { width: 112px; padding-left: 2px; }
.entrows { width: 116px; padding-left: 1px; }
.shapes { display: grid; grid-template-columns: 14px 13px 14px 13px 14px 12px 14px; grid-template-rows: repeat(3, 17px); align-items: center; justify-items: center; padding: 0 2px; margin-right: 1px; border-left: 1px solid #c3c5ca; border-right: 1px solid #c3c5ca; }
.shapes .ico svg { width: 13px; height: 13px; }

/* work area */
.main { position: relative; flex: 1; display: grid; grid-template-columns: 189px 1fr; }
.cmdtabs { position: absolute; left: 0; top: 0; display: flex; z-index: 2; background: #aeb0b4; border-right: 1px solid #7d7f84; }
.cmdtabs button { height: 15px; padding: 0 4px; border-right: 1px solid #8d8f94; color: #2c2c30; }
.cmdtabs button:last-child { border-right: 0; }
.cmdtabs .on { background: #dcdee2; padding: 0 6px; font-weight: 500; }
.side { position: relative; padding-top: 16px; background: #d6d9de; border-right: 1px solid #8d8f94; }
.grip { display: flex; justify-content: center; align-items: center; height: 12px; margin-right: 2px; border-top: 1px solid #6c8ba4; border-bottom: 1px solid #8b9aa8; }
.grip i, .collapse i { width: 4px; height: 4px; border: 1px solid #888; border-radius: 50%; }
.ptabs { display: flex; margin: 3px 2px 0 1px; border-bottom: 1px solid #999ba0; }
.ptabs button { width: 27px; height: 17px; background: #a8aaae; border-right: 1px solid #85878b; }
.ptabs .on { background: #d8dbe0; }
.ptabs svg { width: 13px; height: 13px; }
.phead { display: grid; grid-template-columns: 1fr 10px; align-items: center; padding: 5px 9px 0 0; }
.phead h1 { margin: 0; padding-left: 1px; font-size: 8px; font-weight: 500; text-align: center; }
.q { width: 10px; height: 10px; border: 1px solid #26688c; border-radius: 50%; color: #26688c; font-weight: 700; }
.cancel { margin: 9px 0 0 6px; width: 8px; height: 8px; }
.cancel svg { width: 8px; height: 8px; }
.msg { margin: 9px 5px 0 3px; border-top: 1px solid #aeb1b6; padding-top: 5px; }
.msghead { width: 100%; justify-content: space-between; padding: 0 1px 0 3px; font-weight: 500; height: 9px; }
.msghead svg { width: 8px; height: 6px; }
.msg p { margin: 4px 0 0; padding: 0 2px 3px 3px; background: #fdff7c; }
.collapse { position: absolute; right: -5px; top: 283px; width: 5px; height: 26px; background: #d0d2d6; border: 1px solid #999; z-index: 2; }

/* graphics area */
.view { position: relative; overflow: hidden; background: #fff; border-right: 1px solid #8d8f94; }
.scene { position: absolute; inset: 0; width: 100%; height: 100%; }
.axis text { font-family: "Liberation Sans", sans-serif; font-size: 7px; }
.tree { position: absolute; left: 3px; top: 18px; display: flex; align-items: center; gap: 5px; }
.tree > svg { width: 4px; height: 6px; }
.tree button { height: 14px; padding: 0 1px 0 2px; gap: 2px; border: 1px solid #8d8f94; background: #fff; }
.hud { position: absolute; left: 0; right: 0; top: 3px; display: flex; justify-content: center; gap: 3px; padding-right: 8px; }
.hud .car { height: 14px; }
.hud .ico svg { width: 13px; height: 13px; }
.docctl { position: absolute; right: 6px; top: 3px; display: flex; gap: 3px; color: #73757c; }
.docctl .ico svg { width: 11px; height: 11px; }
.bigx { position: absolute; right: 25px; top: 28px; width: 24px; height: 24px; }
.bigx svg { width: 24px; height: 24px; }
.taskpane { position: absolute; right: 0; top: 51px; border-left: 1px solid #77797d; border-top: 1px solid #77797d; background: #aeb0b4; }
.taskpane button { width: 16px; height: 16px; border-bottom: 1px solid #77797d; }
.taskpane .on { background: #dfe0e3; }
.taskpane svg { width: 13px; height: 13px; }

/* bottom */
.doctabs { display: flex; height: 11px; background: #d6d8dc; border-top: 1px solid #8d8f94; padding-left: 18px; }
.playback { display: flex; background: #b0b2b6; padding-right: 1px; }
.playback button { width: 11px; border: 1px solid #9b9da1; }
.playback svg { width: 6px; height: 6px; fill: #8b8d91; stroke: #8b8d91; }
.tab { height: 9px; padding: 0 7px; background: #b0b2b6; border-right: 1px solid #8d8f94; }
.tab.on { background: #e0e1e4; font-weight: 700; }
.status { display: flex; align-items: center; height: 12px; padding: 0 3px 0 1px; background: #d9dade; border-top: 1px solid #a1a3a7; }
.product { flex: 1; }
.mode { margin-right: 33px; }
.units { gap: 9px; margin-right: 42px; }
.units svg { width: 6px; height: 6px; }
```
